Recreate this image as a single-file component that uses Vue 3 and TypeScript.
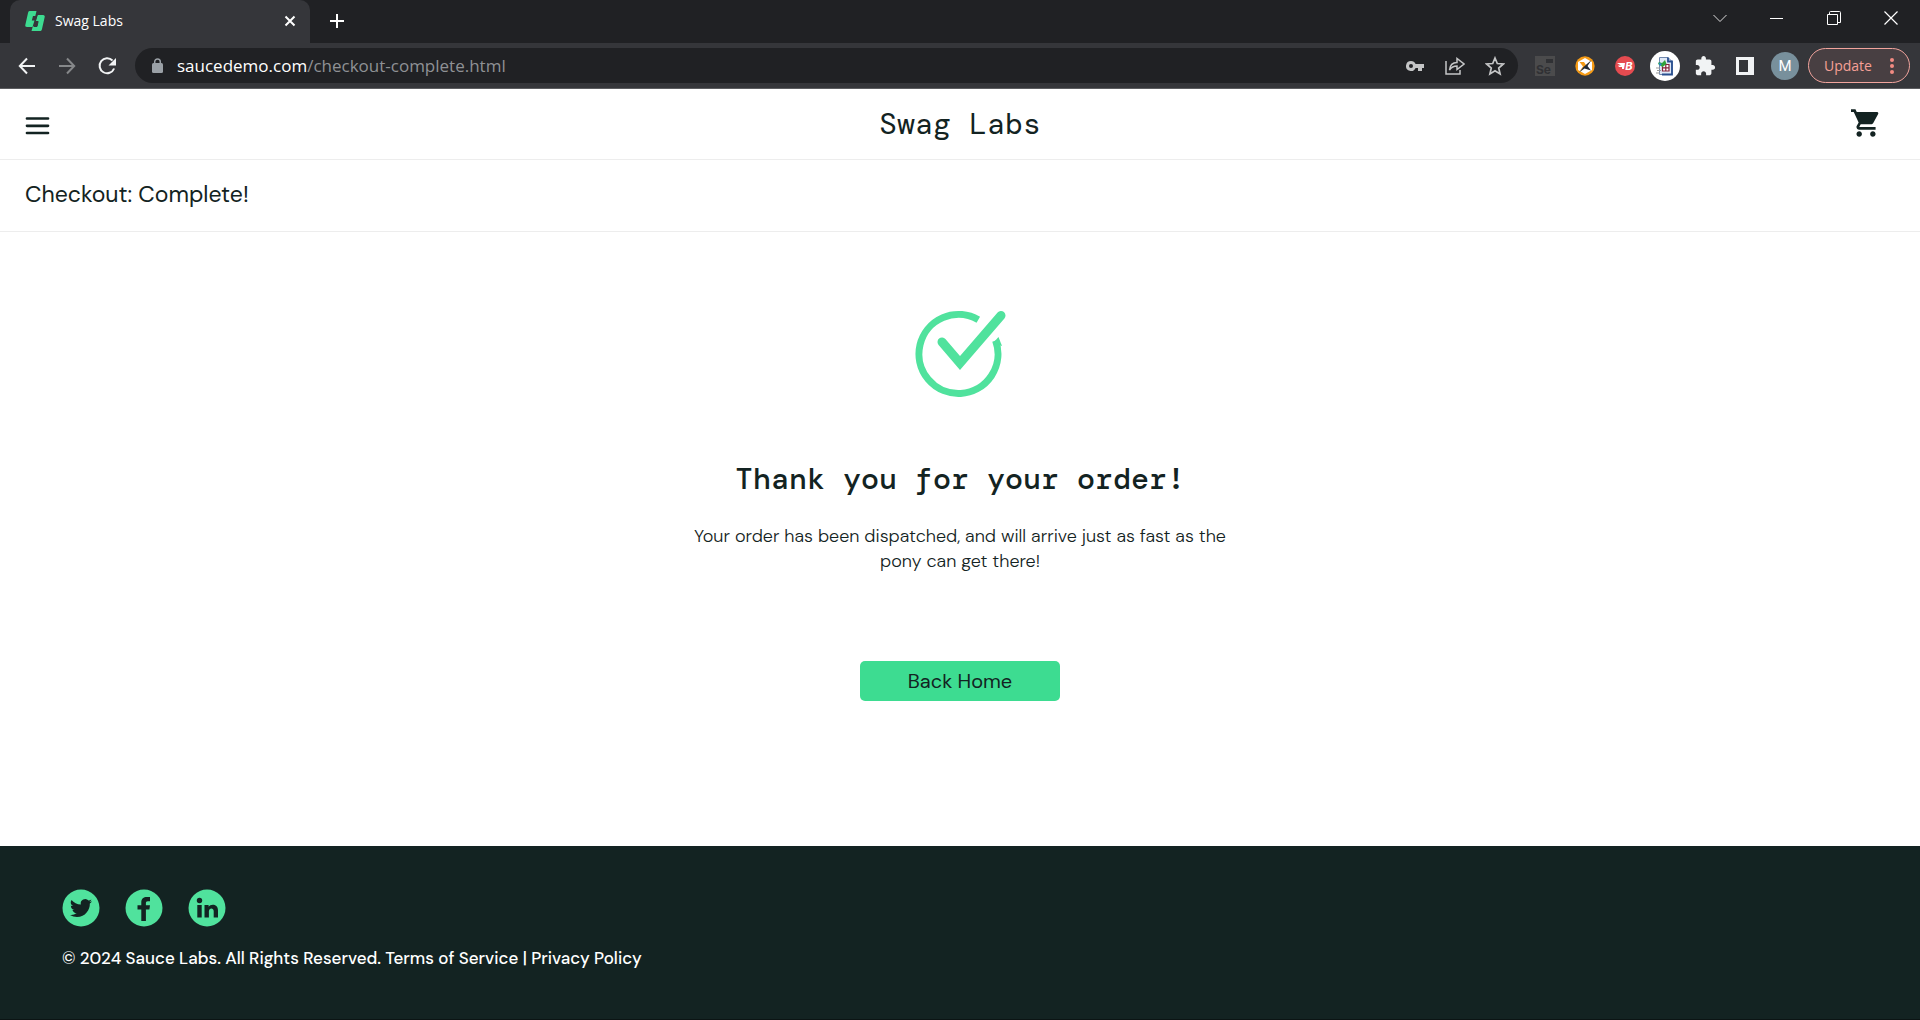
<script setup lang="ts">
import { ref } from 'vue'

const address = { host: 'saucedemo.com', path: '/checkout-complete.html' }
const title = ref('Swag Labs')
</script>

<template>
  <div class="window">
    <div class="tabs">
      <div class="tab">
        <svg class="favicon" width="20" height="20" viewBox="0 0 20 20" aria-hidden="true">
          <path d="M4.500 0H11.500L10.300 5H8L6.800 9.500H9.500L7.500 16H2C.6 16 0 15 .3 14L3 2C3.300.700 3.700 0 4.500 0Z" fill="#3ddc91" />
          <path d="M12.500 4H18C19.500 4 20 5 19.700 6L17 18C16.700 19.300 16.300 20 15.500 20H6.500L7.800 15.500H12L13.200 10.500H10.500Z" fill="#3ddc91" />
          <path d="M12.200 4L10.300 10.500H13.100L12 15.500H9" fill="none" stroke="#35363a" stroke-width="1" />
        </svg>
        <span class="tab-title">{{ title }}</span>
        <button class="icon tab-close" aria-label="Close tab">
          <svg width="12" height="12" viewBox="0 0 12 12"><path d="M1.500 1.500L10.500 10.500M10.500 1.500L1.500 10.500" stroke="#fff" stroke-width="2" /></svg>
        </button>
      </div>
      <button class="icon new-tab" aria-label="New tab">
        <svg width="16" height="16" viewBox="0 0 16 16"><path d="M8 1V15M1 8H15" stroke="#fff" stroke-width="2" /></svg>
      </button>
      <div class="controls">
        <button class="icon" aria-label="Search tabs"><svg width="14" height="14" viewBox="0 0 14 14"><path d="M.5 4L7 10.500L13.500 4" fill="none" stroke="#ddd" /></svg></button>
        <button class="icon" aria-label="Minimize"><svg width="14" height="14" viewBox="0 0 14 14"><path d="M0 7.500H13" stroke="#fff" /></svg></button>
        <button class="icon" aria-label="Restore"><svg width="14" height="14" viewBox="0 0 14 14"><path d="M.5 3.500H10.500V13.500H.500ZM2.500 3.500V1.500Q2.500.500 3.500.500H12.500Q13.500.500 13.500 1.500V11.500H10.500" fill="none" stroke="#fff" /></svg></button>
        <button class="icon" aria-label="Close"><svg width="14" height="14" viewBox="0 0 14 14"><path d="M.5.5L13.500 13.500M13.500.500L.500 13.500" stroke="#fff" stroke-width="1.200" /></svg></button>
      </div>
    </div>

    <div class="toolbar">
      <button class="icon slot" aria-label="Back"><svg width="18" height="18" viewBox="0 0 18 18"><path d="M17 9H2M9 1.500L1.800 9L9 16.500" fill="none" stroke="#f1f3f4" stroke-width="2" /></svg></button>
      <button class="icon slot" aria-label="Forward"><svg width="18" height="18" viewBox="0 0 18 18"><path d="M1 9H16M9 1.500L16.200 9L9 16.500" fill="none" stroke="#86888a" stroke-width="2" /></svg></button>
      <button class="icon slot" aria-label="Reload"><svg width="20" height="20" viewBox="0 0 20 20"><path d="M15.500 4.500A7.500 7.500 0 1 0 17.100 12.500" fill="none" stroke="#f1f3f4" stroke-width="2" /><path d="M19 2V9.500H11.500Z" fill="#f1f3f4" /></svg></button>
      <div class="omnibox">
        <svg width="12" height="16" viewBox="0 0 12 16" aria-hidden="true"><rect x="0" y="5" width="11" height="10" rx="1.500" fill="#9aa0a6" /><path d="M2.700 6V3.800A2.800 2.800 0 0 1 8.300 3.800V6" fill="none" stroke="#9aa0a6" stroke-width="1.500" /></svg>
        <span class="url">{{ address.host }}<span class="path">{{ address.path }}</span></span>
        <button class="icon slot" aria-label="Passwords"><svg width="18" height="12" viewBox="0 0 18 12"><path d="M5 1A5 5 0 1 0 9.600 8H12V11H16V8H18V4H9.600A5 5 0 0 0 5 1ZM5 4A2 2 0 1 1 5 8A2 2 0 1 1 5 4" fill="#c4c5c6" fill-rule="evenodd" /></svg></button>
        <button class="icon slot" aria-label="Share"><svg width="20" height="18" viewBox="0 0 20 18"><path d="M1 4V17H15V13M4.500 13C5 8 7.500 5.500 12 5.500V1.500L19 7L12 12.500V9C8.500 9 6.500 10 4.500 13Z" fill="none" stroke="#c4c5c6" stroke-width="1.500" /></svg></button>
        <button class="icon slot" aria-label="Bookmark"><svg width="20" height="20" viewBox="0 0 20 20"><path d="M10 2L12.300 7.500L18.300 8L13.700 12L15.100 18L10 14.800L4.900 18L6.300 12L1.700 8L7.700 7.500Z" fill="none" stroke="#c4c5c6" stroke-width="1.700" /></svg></button>
      </div>
      <div class="extensions">
        <button class="icon slot" aria-label="Selenium IDE">
          <span class="selenium"><i></i>Se</span>
        </button>
        <button class="icon slot" aria-label="Page inspector">
          <svg width="20" height="20" viewBox="0 0 20 20"><circle cx="10" cy="10" r="9.700" fill="#f59b16" /><path d="M10 2L17 6V14L10 18L3 14V6Z" fill="#fff" /><path d="M4.500 6H9L11 9L16 4.500L4 16L8 10.500Z" fill="#f59b16" /><path d="M16.500 4L12.500 10L16 14.500L9.500 12.500L4 16.500L8.500 11Z" fill="#222b35" /></svg>
        </button>
        <button class="icon slot" aria-label="BlazeMeter">
          <span class="blaze"><svg width="8" height="10" viewBox="0 0 8 10"><path d="M0 2H8L7 8H5V6H2L1 4.500H4Z" fill="#fff" /></svg>B</span>
        </button>
        <button class="icon slot" aria-label="Table capture">
          <span class="capture"><svg width="18" height="20" viewBox="0 0 18 20"><path d="M3.500 1.500H12L16 5.500V18.500H3.500Z" fill="#dfe8f6" stroke="#6f87ad" /><path d="M12 1.500V5.500H16V18.500H6" fill="none" stroke="#294f8f" stroke-width="1.800" /><path d="M6.500 8.500H13V15H6.500ZM9.800 8.500V15M6.500 11.800H13" fill="#fff" stroke="#85243c" stroke-width="1.200" /><path d="M3 6L6 7L9 4L10.500 8L6.500 11L2 8Z" fill="#30a43b" /><path d="M2.500 6.500L6 8L4 10Z" fill="#2184d8" /><path d="M0 12H4M1 14.500H5M0 17H4" stroke="#999" /></svg></span>
        </button>
        <button class="icon slot" aria-label="Extensions"><svg width="22" height="22" viewBox="0 0 24 24"><path d="M20.500 11H19V7c0-1.100-.9-2-2-2h-4V3.500C13 2.120 11.880 1 10.500 1S8 2.120 8 3.500V5H4c-1.100 0-1.990.9-1.990 2v3.800H3.500c1.490 0 2.700 1.210 2.700 2.700s-1.210 2.700-2.700 2.700H2V20c0 1.100.9 2 2 2h3.800v-1.500c0-1.490 1.210-2.700 2.700-2.700s2.700 1.210 2.700 2.700V22H17c1.100 0 2-.9 2-2v-4h1.500c1.380 0 2.500-1.120 2.500-2.500S21.880 11 20.500 11z" fill="#f1f3f4" /></svg></button>
        <button class="icon slot" aria-label="Side panel"><svg width="18" height="18" viewBox="0 0 18 18"><path d="M0 0H18V18H0ZM3 3V15H12V3Z" fill="#f1f3f4" fill-rule="evenodd" /></svg></button>
        <button class="icon slot" aria-label="Profile"><span class="avatar">M</span></button>
      </div>
      <button class="update">Update<svg width="4" height="18" viewBox="0 0 4 18" aria-hidden="true"><circle cx="2" cy="3" r="2" fill="#f28b82" /><circle cx="2" cy="9" r="2" fill="#f28b82" /><circle cx="2" cy="15" r="2" fill="#f28b82" /></svg></button>
    </div>

    <header class="header">
      <button class="icon menu" aria-label="Open menu"><svg width="25" height="20" viewBox="0 0 25 20"><path d="M2 2.500H23M2 9.800H23M2 17H23" stroke="#132322" stroke-width="2.700" stroke-linecap="round" /></svg></button>
      <div class="logo">{{ title }}</div>
      <a class="cart" href="#" aria-label="Cart"><svg width="28" height="28" viewBox="1 2 20.500 20"><path d="M7 18c-1.100 0-1.990.9-1.990 2S5.900 22 7 22s2-.9 2-2-.9-2-2-2zM1 2v2h2l3.600 7.590-1.350 2.450c-.16.280-.25.610-.25.960 0 1.100.9 2 2 2h12v-2H7.420c-.14 0-.25-.11-.25-.25l.03-.12.900-1.630h7.450c.75 0 1.410-.41 1.750-1.030l3.580-6.490c.08-.14.120-.31.120-.480 0-.55-.45-1-1-1H5.210l-.94-2H1zm16 16c-1.100 0-1.990.9-1.990 2s.89 2 1.990 2 2-.9 2-2-.9-2-2-2z" fill="#132322" /></svg></a>
    </header>
    <div class="subheader">Checkout: Complete!</div>

    <main class="content">
      <svg width="91" height="88" viewBox="0 0 91 88" role="img" aria-label="Order complete">
        <path d="M63.300 9.800A39.500 39.500 0 1 0 80.600 30.500" fill="none" stroke="#50e29d" stroke-width="7" />
        <path d="M78 33L83.500 27L87 36Z" fill="#50e29d" />
        <path d="M27 32L45 53L86 5.500" fill="none" stroke="#50e29d" stroke-width="9" stroke-linecap="round" />
      </svg>
      <h1>Thank you for your order!</h1>
      <p>Your order has been dispatched, and will arrive just as fast as the pony can get there!</p>
      <button class="home">Back Home</button>
    </main>

    <footer class="footer">
      <div class="social">
        <a href="#" aria-label="Twitter"><svg width="38" height="38" viewBox="0 0 38 38"><circle cx="19" cy="19" r="18.500" fill="#50e29d" /><path transform="translate(8 8) scale(.92)" d="M23.950 4.570a10 10 0 0 1-2.820.77 4.960 4.960 0 0 0 2.160-2.720c-.95.55-2 .95-3.130 1.180a4.920 4.920 0 0 0-8.380 4.480C7.690 8.090 4.070 6.130 1.640 3.160a4.920 4.920 0 0 0 1.520 6.570 4.900 4.900 0 0 1-2.230-.61v.06a4.920 4.920 0 0 0 3.950 4.830 5 5 0 0 1-2.210.08 4.940 4.940 0 0 0 4.600 3.420A9.870 9.870 0 0 1 0 19.540a13.990 13.990 0 0 0 7.550 2.210c9.140 0 14.310-7.720 14.010-14.640a9.940 9.940 0 0 0 2.390-2.540z" fill="#132322" /></svg></a>
        <a href="#" aria-label="Facebook"><svg width="38" height="38" viewBox="0 0 38 38"><circle cx="19" cy="19" r="18.500" fill="#50e29d" /><path d="M16.300 32V20.500H12.500V16.300H16.300V13.300C16.300 9.600 18.600 8 21.800 8H25V12.200H22.900C21.300 12.200 20.900 12.900 20.900 14.200V16.300H25L24.400 20.500H20.900V32Z" fill="#132322" /></svg></a>
        <a href="#" aria-label="LinkedIn"><svg width="38" height="38" viewBox="0 0 38 38"><circle cx="19" cy="19" r="18.500" fill="#50e29d" /><circle cx="11.500" cy="11.500" r="2.700" fill="#132322" /><path d="M9.300 16H13.700V28.500H9.300ZM16.500 16H20.600V17.700C22.500 14.700 30 14.500 30 21.500V28.500H25.700V22.300C25.700 18.300 20.900 18.700 20.900 22.300V28.500H16.500Z" fill="#132322" /></svg></a>
      </div>
      <div class="copy">© 2024 Sauce Labs. All Rights Reserved. Terms of Service | Privacy Policy</div>
    </footer>
  </div>
</template>

<style>
body { margin: 0; background: #fff; }
</style>

<style scoped>
* { box-sizing: border-box; }
svg { display: block; flex: none; }
button { font: inherit; color: inherit; }
.window { min-height: 100vh; display: flex; flex-direction: column; color: #132322; font-family: "DM Sans", Inter, sans-serif; }
.icon { display: flex; align-items: center; justify-content: center; padding: 0; border: 0; background: none; }
.slot { width: 40px; height: 36px; flex: none; }

.tabs { height: 43px; display: flex; padding-left: 10px; background: #202124; }
.tab { width: 300px; display: flex; align-items: center; padding: 0 13px 2px 15px; border-radius: 10px 10px 0 0; background: #35363a; color: #fff; font: 14px "Segoe UI", "Open Sans", sans-serif; }
.tab-title { flex: 1; margin-left: 10px; }
.tab-close { width: 14px; height: 20px; }
.new-tab { width: 36px; margin-left: 9px; padding-bottom: 1px; }
.controls { display: flex; margin-left: auto; padding: 0 1px 7px 0; }
.controls .icon { width: 57px; }

.toolbar { height: 46px; display: flex; align-items: center; padding: 0 10px 0 7px; background: #35363a; border-bottom: 1px solid #5c5d60; font-family: "Segoe UI", "Open Sans", sans-serif; }
.omnibox { flex: 1; height: 35px; display: flex; align-items: center; margin-left: 8px; padding: 0 3px 0 17px; border-radius: 18px; background: #202124; }
.url { flex: 1; margin-left: 13px; color: #fff; font-size: 17px; line-height: 24px; }
.path { color: #8f9195; }
.extensions { display: flex; margin: 0 3px 0 7px; }
.selenium { position: relative; width: 20px; height: 20px; display: flex; align-items: flex-end; padding-left: 1px; background: #4b4b4c; color: #303134; font: bold 12px/13px Inter, sans-serif; }
.selenium i { position: absolute; top: 3px; right: 2px; width: 7px; height: 4px; background: #303134; }
.blaze { width: 20px; height: 20px; display: flex; align-items: center; justify-content: center; border-radius: 50%; background: #e54b50; color: #fff; font: italic bold 11px/20px Inter, sans-serif; }
.capture { width: 30px; height: 30px; display: flex; align-items: center; justify-content: center; border-radius: 50%; background: #fff; }
.avatar { width: 28px; height: 28px; border-radius: 50%; background: #78909c; color: #fff; font: 15px/28px Roboto, sans-serif; }
.update { width: 102px; height: 35px; display: flex; align-items: center; justify-content: space-between; padding: 0 15px 0 15px; border: 1px solid #f2a49d; border-radius: 18px; background: #483f42; color: #f6a096; font-size: 14px; }

.header { height: 71px; display: grid; grid-template-columns: 1fr auto 1fr; align-items: center; padding: 0 41px 0 25px; border-bottom: 1px solid #ededed; }
.menu { justify-self: start; padding-top: 3px; }
.logo { margin-left: 16px; font: 30px/36px "DM Mono", "Liberation Mono", monospace; }
.cart { justify-self: end; padding-bottom: 2px; }
.subheader { height: 72px; padding: 0 25px; border-bottom: 1px solid #ededed; font-size: 23px; line-height: 69px; }

.content { flex: 1; display: flex; flex-direction: column; align-items: center; padding-top: 78px; }
h1 { margin: 63px 0 0; font: 500 30px/36px "DM Mono", "DejaVu Sans Mono", monospace; }
p { width: 540px; margin: 27px 0 0; text-align: center; font-size: 18px; font-weight: 300; line-height: 25px; }
.home { width: 200px; height: 40px; margin: 87px 0 0; padding: 0; border: 0; border-radius: 5px; background: #3ddc91; color: #132322; font-size: 20px; }

.footer { height: 174px; padding: 43px 62px 0; background: #132322; color: #fff; border-bottom: 1px solid #0b1414; }
.social { display: flex; gap: 25px; }
.copy { margin-top: 19px; font-size: 17px; font-weight: 500; line-height: 25px; }
</style>
